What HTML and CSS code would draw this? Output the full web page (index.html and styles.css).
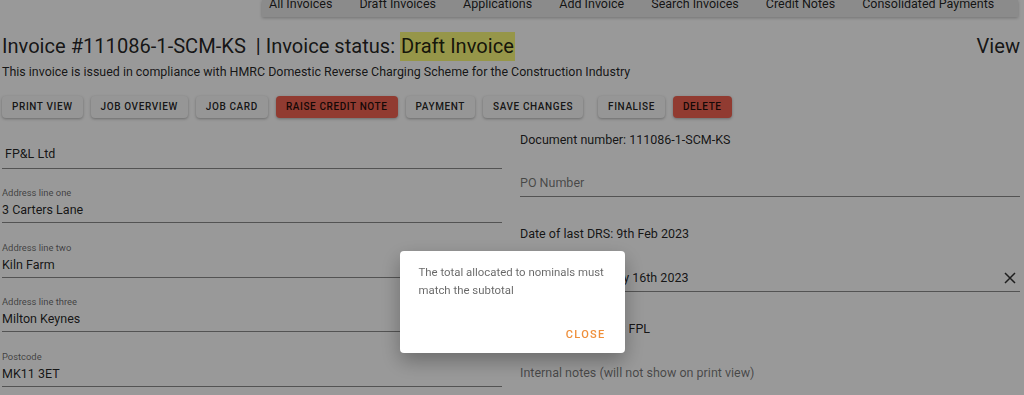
FILE: index.html
```html
<html>
    <head>
        <title>Invoice 111086-1-SCM-KS</title>
        <link rel="stylesheet" href="styles.css">
    </head>

    <body>
        <div class="topNav">
            <span>All Invoices</span>
            <span>Draft Invoices</span>
            <span>Applications</span>
            <span>Add Invoice</span>
            <span>Search Invoices</span>
            <span>Credit Notes</span>
            <span>Consolidated Payments</span>
        </div>

        <div class="page">
            <div class="titleRow">
                <h1 class="invoiceTitle">Invoice #111086-1-SCM-KS &nbsp;| Invoice status: <span class="statusDraft">Draft Invoice</span></h1>
                <span class="viewLink">View</span>
            </div>
            <p class="drsNotice">This invoice is issued in compliance with HMRC Domestic Reverse Charging Scheme for the Construction Industry</p>

            <div class="buttonRow">
                <button class="actionButton">Print view</button>
                <button class="actionButton">Job overview</button>
                <button class="actionButton">Job card</button>
                <button class="actionButton danger">Raise credit note</button>
                <button class="actionButton">Payment</button>
                <button class="actionButton">Save changes</button>
                <button class="actionButton spaced">Finalise</button>
                <button class="actionButton danger">Delete</button>
            </div>

            <div class="invoiceForm">
                <div class="formColumn">
                    <div class="field first">
                        <div class="fieldValue">FP&amp;L Ltd</div>
                    </div>
                    <div class="field">
                        <div class="fieldLabel">Address line one</div>
                        <div class="fieldValue">3 Carters Lane</div>
                    </div>
                    <div class="field">
                        <div class="fieldLabel">Address line two</div>
                        <div class="fieldValue">Kiln Farm</div>
                    </div>
                    <div class="field">
                        <div class="fieldLabel">Address line three</div>
                        <div class="fieldValue">Milton Keynes</div>
                    </div>
                    <div class="field">
                        <div class="fieldLabel">Postcode</div>
                        <div class="fieldValue">MK11 3ET</div>
                    </div>
                </div>

                <div class="formColumn">
                    <div class="infoLine">Document number: 111086-1-SCM-KS</div>
                    <div class="field poField">
                        <div class="fieldValue placeholder">PO Number</div>
                    </div>
                    <div class="infoLine drsLine">Date of last DRS: 9th Feb 2023</div>
                    <div class="field dateField">
                        <div class="fieldValue">
                            <span class="dateText">Due date: February 16th 2023</span>
                            <svg class="clearIcon" width="12" height="12" viewBox="0 0 12 12">
                                <path d="M1 1 L11 11 M11 1 L1 11" stroke="#333" stroke-width="1.5" fill="none"/>
                            </svg>
                        </div>
                    </div>
                    <div class="infoLine accountLine">Customer account: FPL</div>
                    <div class="field notesField">
                        <div class="fieldValue placeholder">Internal notes (will not show on print view)</div>
                    </div>
                </div>
            </div>
        </div>

        <div class="dialogBackdrop">
            <div class="dialog">
                <div class="dialogText">The total allocated to nominals must match the subtotal</div>
                <div class="dialogActions">
                    <button class="dialogButton">Close</button>
                </div>
            </div>
        </div>
    </body>
</html>
```

FILE: styles.css
```css
body {
    margin: 0;
    background-color: #ffffff;
    font-family: Roboto, "Noto Sans", sans-serif;
    color: rgba(0, 0, 0, 0.87);
}

.topNav {
    display: flex;
    gap: 27px;
    margin-left: 262px;
    width: 742px;
    height: 17px;
    padding: 0 7px;
    background-color: #e8e8e8;
    box-shadow: 0 1px 3px rgba(0, 0, 0, 0.25);
    overflow: hidden;
    font-size: 12.5px;
}

.topNav span {
    line-height: 12px;
    margin-top: -2px;
    white-space: nowrap;
}

.page {
    padding: 0 4px 0 2px;
}

.titleRow {
    display: flex;
    justify-content: space-between;
    margin-top: 15px;
}

.invoiceTitle {
    margin: 0;
    font-size: 20.1px;
    font-weight: 400;
    line-height: 29px;
}

.statusDraft {
    display: inline-block;
    background-color: #fafa7a;
    padding: 0 1px;
}

.viewLink {
    font-size: 20.1px;
    line-height: 29px;
}

.drsNotice {
    margin: 3px 0 0 0;
    font-size: 12.45px;
    line-height: 16px;
}

.buttonRow {
    display: flex;
    gap: 8px;
    margin-top: 16px;
}

.actionButton {
    font-family: Roboto, sans-serif;
    font-size: 10px;
    font-weight: 500;
    letter-spacing: 0.6px;
    text-transform: uppercase;
    line-height: 14px;
    padding: 4px 10px;
    border: none;
    border-radius: 4px;
    background-color: #fafafa;
    color: rgba(0, 0, 0, 0.87);
    box-shadow: 0 1px 3px rgba(0, 0, 0, 0.3);
}

.actionButton.danger {
    background-color: #f26352;
}

.actionButton.spaced {
    margin-left: 7px;
}

.invoiceForm {
    display: grid;
    grid-template-columns: 500px 500px;
    column-gap: 18px;
    margin-top: 12px;
}

.formColumn {
    display: flex;
    flex-direction: column;
}

.field {
    margin-top: 18.5px;
    border-bottom: 1px solid #8a8a8a;
}

.field.first {
    margin-top: 13px;
}

.field.first + .field {
    margin-top: 18px;
}

.fieldLabel {
    font-size: 9.4px;
    line-height: 12px;
    color: rgba(0, 0, 0, 0.6);
}

.fieldValue {
    display: flex;
    justify-content: space-between;
    align-items: center;
    font-size: 12.5px;
    line-height: 22px;
    padding-bottom: 1px;
}

.field.first .fieldValue {
    padding: 0 0 3px 3px;
}

.placeholder {
    color: rgba(0, 0, 0, 0.55);
    padding-bottom: 2px;
}

.infoLine {
    font-size: 12.5px;
    line-height: 20px;
}

.poField {
    margin-top: 22px;
}

.drsLine {
    margin-top: 27px;
}

.dateField {
    margin-top: 23px;
}

.dateField .fieldValue {
    padding-bottom: 2px;
}

.dateText {
    padding-left: 5px;
}

.clearIcon {
    margin-right: 4px;
}

.accountLine {
    margin-top: 27px;
}

.notesField {
    margin-top: 23px;
    border-bottom: none;
}

.dialogBackdrop {
    position: fixed;
    top: 0;
    left: 0;
    right: 0;
    bottom: 0;
    background-color: rgba(0, 0, 0, 0.4);
    display: flex;
    justify-content: center;
    align-items: flex-start;
}

.dialog {
    margin-top: 251px;
    width: 225px;
    height: 102px;
    box-sizing: border-box;
    background-color: #ffffff;
    border-radius: 4px;
    box-shadow: 0 8px 20px rgba(0, 0, 0, 0.3);
    padding: 12px 19px 0 19px;
    display: flex;
    flex-direction: column;
}

.dialogText {
    font-size: 11.4px;
    line-height: 18px;
    color: rgba(0, 0, 0, 0.6);
}

.dialogActions {
    display: flex;
    justify-content: flex-end;
    margin-top: auto;
    margin-bottom: 7px;
}

.dialogButton {
    font-family: Roboto, sans-serif;
    font-size: 11px;
    font-weight: 500;
    letter-spacing: 1.3px;
    text-transform: uppercase;
    border: none;
    background: none;
    color: #ef8f3a;
    padding: 4px 0;
    line-height: 14px;
}
```
